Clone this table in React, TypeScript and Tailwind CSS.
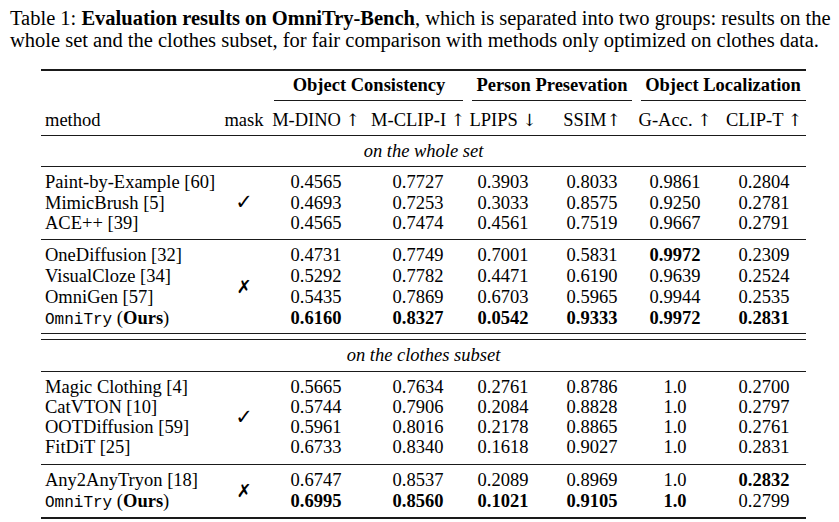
import React from "react"

type Cell = { v: string; b?: boolean }
type Row = { name: string; ours?: boolean; vals: Cell[] }

const cols = "grid grid-cols-[179px_48px_96px_104px_70px_98px_78px_92px]"
// per-column padding so text centres land where the reference has them
const pad = ["", "", "", "pl-[4px]", "", "pl-[10px]", "", "pl-[8px]"]

const c = (v: string, b = false): Cell => ({ v, b })

const groups: { mark: string; pt: string; pb: string; h: string; rows: Row[] }[] = [
    {
        mark: "✓",
        pt: "pt-[5px]",
        pb: "pb-[5.5px]",
        h: "auto-rows-[20.5px]",
        rows: [
            { name: "Paint-by-Example [60]", vals: [c("0.4565"), c("0.7727"), c("0.3903"), c("0.8033"), c("0.9861"), c("0.2804")] },
            { name: "MimicBrush [5]", vals: [c("0.4693"), c("0.7253"), c("0.3033"), c("0.8575"), c("0.9250"), c("0.2781")] },
            { name: "ACE++ [39]", vals: [c("0.4565"), c("0.7474"), c("0.4561"), c("0.7519"), c("0.9667"), c("0.2791")] },
        ],
    },
    {
        mark: "✗",
        pt: "pt-[4.5px]",
        pb: "pb-[4.5px]",
        h: "auto-rows-[21px]",
        rows: [
            { name: "OneDiffusion [32]", vals: [c("0.4731"), c("0.7749"), c("0.7001"), c("0.5831"), c("0.9972", true), c("0.2309")] },
            { name: "VisualCloze [34]", vals: [c("0.5292"), c("0.7782"), c("0.4471"), c("0.6190"), c("0.9639"), c("0.2524")] },
            { name: "OmniGen [57]", vals: [c("0.5435"), c("0.7869"), c("0.6703"), c("0.5965"), c("0.9944"), c("0.2535")] },
            { name: "", ours: true, vals: [c("0.6160", true), c("0.8327", true), c("0.0542", true), c("0.9333", true), c("0.9972", true), c("0.2831", true)] },
        ],
    },
]

const groups2: typeof groups = [
    {
        mark: "✓",
        pt: "pt-[5px]",
        pb: "pb-[7px]",
        h: "auto-rows-[20px]",
        rows: [
            { name: "Magic Clothing [4]", vals: [c("0.5665"), c("0.7634"), c("0.2761"), c("0.8786"), c("1.0"), c("0.2700")] },
            { name: "CatVTON [10]", vals: [c("0.5744"), c("0.7906"), c("0.2084"), c("0.8828"), c("1.0"), c("0.2797")] },
            { name: "OOTDiffusion [59]", vals: [c("0.5961"), c("0.8016"), c("0.2178"), c("0.8865"), c("1.0"), c("0.2761")] },
            { name: "FitDiT [25]", vals: [c("0.6733"), c("0.8340"), c("0.1618"), c("0.9027"), c("1.0"), c("0.2831")] },
        ],
    },
    {
        mark: "✗",
        pt: "pt-[4.5px]",
        pb: "pb-[5.5px]",
        h: "auto-rows-[21px]",
        rows: [
            { name: "Any2AnyTryon [18]", vals: [c("0.6747"), c("0.8537"), c("0.2089"), c("0.8969"), c("1.0"), c("0.2832", true)] },
            { name: "", ours: true, vals: [c("0.6995", true), c("0.8560", true), c("0.1021", true), c("0.9105", true), c("1.0", true), c("0.2799")] },
        ],
    },
]

function Rule({ h = "h-px" }: { h?: string }) {
    return <div className={`${h} w-full bg-[#1a1a1a]`} />
}

function Group({ g }: { g: (typeof groups)[number] }) {
    const span = g.rows.length === 2 ? "row-span-2" : g.rows.length === 3 ? "row-span-3" : "row-span-4"
    const markSize = g.mark === "✓" ? "text-[21px]" : "text-[18px]"
    return (
        <div className={`${cols} ${g.h} ${g.pt} ${g.pb} items-center`}>
            {g.rows.map((r, i) => (
                <React.Fragment key={i}>
                    <div className="pl-[4px] whitespace-nowrap">
                        {r.ours ? (
                            <>
                                <span className="font-['Liberation_Mono',monospace] text-[16px]">OmniTry</span> (<b>Ours</b>)
                            </>
                        ) : (
                            r.name
                        )}
                    </div>
                    {i === 0 && (
                        <div className={`${span} flex items-center justify-center self-stretch font-['DejaVu_Sans',sans-serif] ${markSize} font-bold`}>
                            {g.mark}
                        </div>
                    )}
                    {r.vals.map((v, j) => (
                        <div key={j} className={`text-center ${pad[j + 2]} ${v.b ? "font-bold" : ""}`}>
                            {v.v}
                        </div>
                    ))}
                </React.Fragment>
            ))}
        </div>
    )
}

function Arrow({ d }: { d: string }) {
    return <span className="font-['DejaVu_Serif',serif] text-[17px]">{d}</span>
}

export default function App() {
    return (
        <div className="w-[839px] h-[522px] bg-white text-black font-['Liberation_Serif',serif] overflow-hidden">
            <div className="pl-[10px] pt-[8px] text-[20.5px] leading-[21.5px] whitespace-nowrap">
                Table 1: <b>Evaluation results on OmniTry-Bench</b>, which is separated into two groups: results on the
                <br />
                whole set and the clothes subset, for fair comparison with methods only optimized on clothes data.
            </div>

            <div className="ml-[41px] mt-[18px] w-[765px] text-[18.5px] leading-none">
                <Rule h="h-[2px]" />

                <div className={`${cols} h-[29px] items-center font-bold`}>
                    <div className="col-span-2" />
                    <div className="col-span-2 text-center pl-[2px]">Object Consistency</div>
                    <div className="col-span-2 text-center">Person Presevation</div>
                    <div className="col-span-2 text-center pl-[4px]">Object Localization</div>
                </div>
                <div className={`${cols} h-px`}>
                    <div className="col-span-2" />
                    <div className="col-span-2 ml-[6px] mr-[5px] bg-[#1a1a1a]" />
                    <div className="col-span-2 ml-[4px] mr-[4px] bg-[#1a1a1a]" />
                    <div className="col-span-2 ml-[5px] bg-[#1a1a1a]" />
                </div>

                <div className={`${cols} h-[34px] pt-[4px] items-center whitespace-nowrap`}>
                    <div className="pl-[4px]">method</div>
                    <div className="text-center">mask</div>
                    <div className="text-center">M-DINO <Arrow d="↑" /></div>
                    <div className="text-center pl-[4px]">M-CLIP-I <Arrow d="↑" /></div>
                    <div className="text-center">LPIPS <Arrow d="↓" /></div>
                    <div className="text-center pl-[10px]">SSIM<Arrow d="↑" /></div>
                    <div className="text-center">G-Acc. <Arrow d="↑" /></div>
                    <div className="text-center pl-[8px]">CLIP-T <Arrow d="↑" /></div>
                </div>
                <Rule />

                <div className="h-[30px] flex items-center justify-center italic">on the whole set</div>
                <Rule />
                <Group g={groups[0]} />
                <Rule />
                <Group g={groups[1]} />
                <Rule />
                <div className="h-[5px]" />
                <Rule />

                <div className="h-[31px] flex items-center justify-center italic">on the clothes subset</div>
                <Rule />
                <Group g={groups2[0]} />
                <Rule />
                <Group g={groups2[1]} />
                <Rule h="h-[2px]" />
            </div>
        </div>
    )
}
